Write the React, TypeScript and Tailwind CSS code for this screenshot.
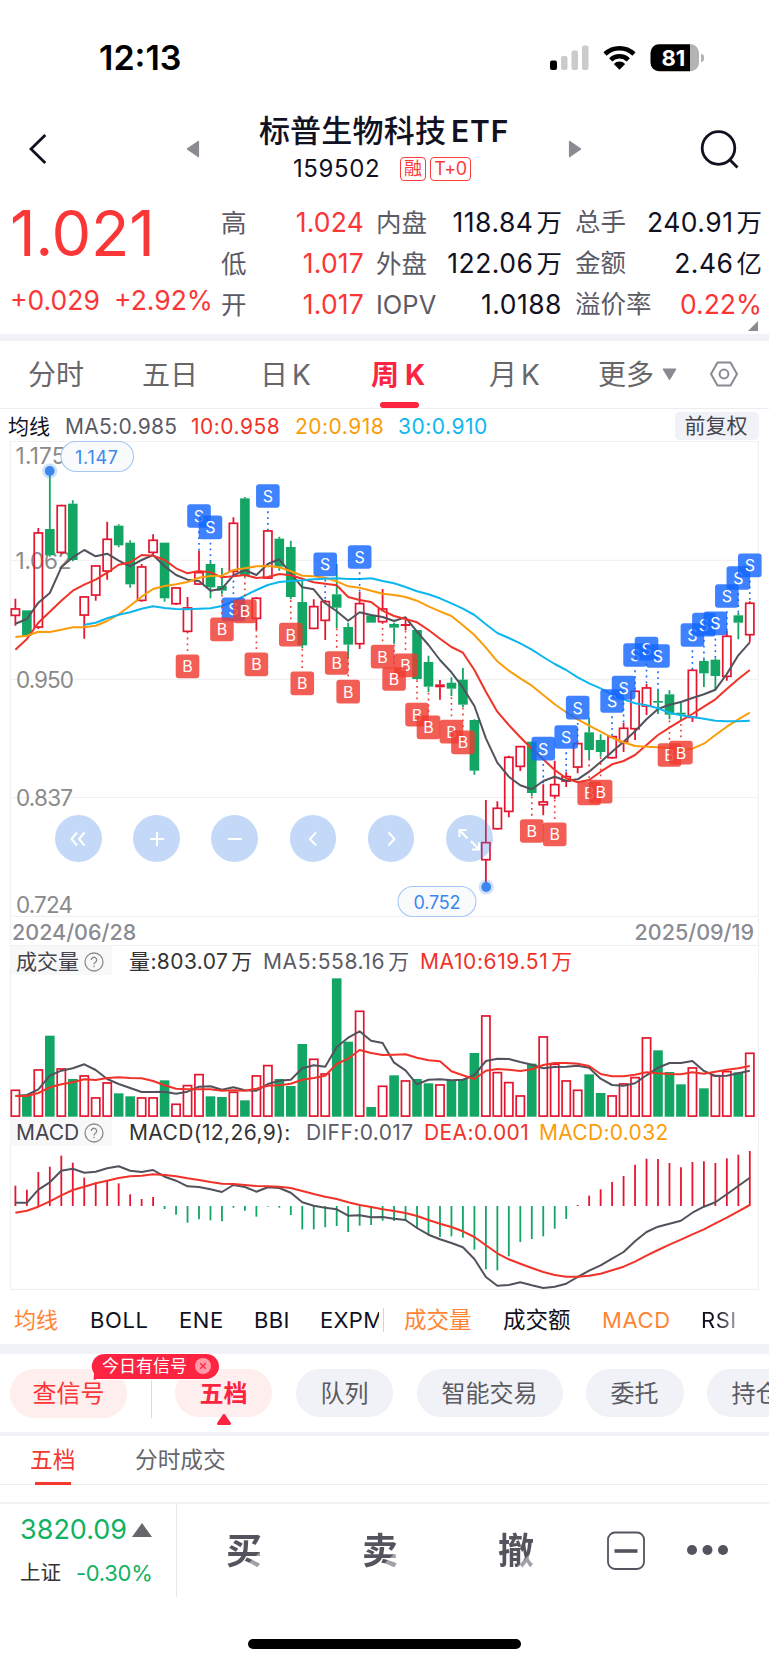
import React from 'react';

type Candle = [high: number, top: number, bottom: number, low: number, up: 0 | 1];
type Signal = [index: number, y: number];

const RED = '#e5152f';
const GREEN = '#12a564';
const GREY_LINE = '#52525d';
const RED_LINE = '#f03228';
const ORANGE_LINE = '#fa9d0b';
const BLUE_LINE = '#0db7ee';
const GRID = '#f1f1f3';

// All chart values are stored at 3x density, one unit is a third of a css pixel
const u = (v: number) => v / 3;
const cx = (i: number) => 15.4 + i * 11.475;

const candles: Candle[] = [
  [476, 506, 527, 557, 1], [511, 511, 587, 590, 0], [264, 278, 562, 567, 1], [93, 267, 346, 350, 0],
  [194, 196, 338, 343, 1], [181, 191, 360, 364, 0], [468, 470, 526, 596, 1], [375, 377, 466, 482, 1],
  [245, 297, 394, 419, 1], [253, 257, 316, 322, 0], [301, 308, 433, 443, 0], [372, 380, 482, 485, 1],
  [283, 300, 338, 343, 1], [308, 308, 475, 485, 0], [441, 443, 492, 495, 1], [471, 503, 575, 578, 1],
  [332, 397, 433, 435, 1], [364, 372, 442, 475, 0], [384, 438, 452, 463, 0], [232, 249, 395, 405, 1],
  [171, 175, 408, 412, 0], [471, 474, 536, 571, 1], [270, 272, 415, 417, 1], [290, 296, 380, 392, 0],
  [302, 321, 471, 478, 0], [420, 486, 616, 624, 0], [478, 499, 566, 568, 1], [480, 484, 542, 600, 1],
  [372, 463, 503, 565, 0], [548, 561, 614, 655, 0], [456, 490, 612, 627, 1], [526, 526, 548, 548, 0],
  [447, 506, 546, 548, 1], [548, 552, 563, 611, 0], [531, 552, 558, 571, 1], [570, 570, 717, 719, 0],
  [647, 666, 740, 756, 0], [720, 733, 742, 779, 1], [712, 728, 746, 768, 0], [684, 719, 794, 802, 0],
  [838, 840, 992, 1004, 0], [1080, 1207, 1260, 1338, 1], [1084, 1104, 1167, 1169, 1], [947, 951, 1115, 1132, 1],
  [918, 919, 980, 993, 1], [905, 905, 1059, 1068, 0], [1033, 1085, 1095, 1126, 1], [962, 1033, 1068, 1076, 1],
  [997, 1009, 1024, 1041, 1], [908, 910, 982, 1000, 1], [833, 877, 930, 957, 0], [883, 900, 936, 950, 0],
  [887, 889, 954, 956, 1], [848, 864, 906, 936, 1], [751, 753, 867, 900, 1], [732, 743, 799, 825, 1],
  [750, 783, 788, 822, 0], [751, 763, 824, 838, 0], [784, 818, 824, 840, 0], [688, 690, 833, 846, 1],
  [656, 663, 700, 741, 0], [655, 659, 708, 749, 0], [572, 588, 710, 722, 1], [518, 526, 548, 598, 0],
  [484, 489, 585, 607, 1],
];

const ma5 = [
  551, 537, 488, 459, 382, 352, 330, 349, 341, 362, 379, 360, 345, 379, 405, 419, 423, 452, 446, 406, 390, 405,
  372, 358, 400, 442, 448, 490, 514, 542, 517, 525, 531, 543, 532, 575, 615, 660, 697, 743, 798, 895, 968, 1010,
  1036, 1048, 1023, 1010, 1022, 1018, 995, 966, 935, 905, 874, 838, 807, 794, 786, 774, 763, 749, 702, 646, 607,
];
const ma10 = [
  629, 597, 548, 515, 482, 452, 434, 419, 398, 374, 367, 345, 347, 360, 385, 400, 393, 397, 412, 409, 405, 414,
  411, 402, 406, 416, 427, 431, 436, 471, 480, 486, 512, 528, 537, 547, 570, 596, 621, 638, 690, 755, 815, 855,
  892, 926, 958, 990, 1015, 1027, 1020, 995, 973, 963, 945, 915, 885, 863, 842, 822, 800, 778, 747, 717, 690,
];
const ma20 = [
  591, 587, 575, 576, 569, 562, 562, 557, 543, 523, 497, 470, 447, 438, 433, 426, 413, 408, 407, 390, 385, 379,
  378, 382, 394, 407, 409, 413, 424, 439, 443, 452, 461, 465, 471, 482, 499, 514, 528, 556, 585, 623, 664, 692,
  715, 737, 765, 793, 817, 838, 857, 875, 893, 907, 918, 920, 922, 924, 930, 926, 911, 885, 860, 838, 818,
];
// MA30 only starts at the seventh candle
const ma30 = [
  554, 548, 535, 524, 517, 506, 499, 504, 507, 508, 506, 505, 498, 484, 467, 450, 435, 426, 423, 421, 418, 416,
  415, 417, 417, 415, 423, 430, 441, 454, 463, 475, 490, 506, 525, 553, 579, 594, 610, 629, 651, 672, 690, 712,
  730, 745, 763, 778, 790, 796, 805, 818, 826, 831, 836, 842, 844, 844, 842,
];

const buys: Signal[] = [
  [15, 679], [18, 568], [20, 514], [21, 673], [24, 584], [25, 730], [28, 669], [29, 755], [32, 650], [34, 676],
  [33, 717], [35, 824], [36, 862], [38, 875], [39, 907], [45, 1173], [47, 1183], [50, 1060], [51, 1055],
  [57, 945], [58, 938],
];
const sells: Signal[] = [
  [16, 228], [17, 262], [19, 508], [22, 168], [27, 373], [30, 351], [46, 926], [48, 891], [49, 803], [52, 783],
  [53, 743], [54, 645], [55, 626], [56, 648], [59, 585], [60, 554], [61, 550], [62, 468], [63, 414], [64, 376],
];

const volumes = [
  390, 406, 329, 227, 326, 357, 347, 413, 368, 400, 409, 413, 413, 361, 432, 376, 343, 409, 411, 396, 421, 347,
  316, 357, 378, 252, 297, 341, 55, 245, 153, 441, 378, 346, 362, 357, 370, 374, 360, 357, 279, 167, 337, 367,
  407, 311, 230, 312, 362, 390, 343, 399, 407, 371, 352, 233, 271, 336, 373, 323, 385, 346, 334, 337, 279,
];
const volumeUp = '10101011100110111001011000110010101001000111101111001111000101101'.split('');
const volMa5 = [
  408, 405, 388, 347, 332, 325, 313, 330, 357, 372, 384, 396, 396, 395, 401, 395, 380, 379, 389, 382, 391, 392,
  372, 362, 359, 325, 316, 320, 261, 233, 214, 242, 249, 308, 331, 373, 359, 358, 361, 359, 345, 303, 296, 297,
  306, 314, 325, 321, 320, 317, 323, 356, 375, 377, 370, 346, 323, 309, 309, 303, 333, 348, 347, 340, 332,
];
const volMa10 = [
  408, 408, 399, 382, 373, 367, 358, 360, 354, 352, 354, 355, 363, 376, 386, 388, 388, 388, 392, 391, 392, 386,
  377, 376, 371, 359, 354, 347, 312, 296, 270, 279, 285, 284, 283, 293, 301, 304, 334, 346, 357, 332, 327, 329,
  333, 328, 315, 309, 309, 311, 318, 342, 349, 349, 344, 337, 340, 342, 343, 337, 341, 335, 329, 325, 318,
];

const macdBars = [
  677, 689, 636, 620, 587, 608, 653, 667, 662, 670, 703, 717, 711, 747, 764, 788, 778, 781, 784, 743, 752, 770,
  740, 743, 765, 808, 808, 802, 798, 816, 797, 795, 782, 783, 781, 806, 822, 831, 829, 833, 869, 928, 931, 889,
  846, 837, 829, 806, 777, 735, 707, 688, 666, 648, 614, 596, 597, 609, 622, 606, 604, 609, 595, 584, 573,
];
const diff = [
  728, 728, 689, 667, 632, 626, 638, 635, 625, 619, 632, 636, 630, 650, 662, 679, 681, 688, 696, 675, 681, 695,
  682, 684, 698, 727, 737, 743, 748, 767, 766, 772, 771, 776, 780, 804, 824, 838, 849, 862, 897, 951, 977, 975,
  967, 976, 984, 980, 971, 951, 932, 916, 896, 876, 844, 816, 800, 791, 782, 758, 740, 727, 703, 678, 653,
];
const dea = [
  758, 752, 740, 724, 706, 690, 680, 670, 662, 654, 649, 647, 643, 645, 649, 655, 660, 666, 671, 672, 675, 678,
  679, 680, 684, 693, 702, 710, 717, 727, 735, 741, 748, 753, 759, 768, 780, 791, 801, 814, 831, 856, 880, 898,
  911, 924, 936, 945, 950, 950, 947, 941, 931, 920, 905, 887, 870, 854, 839, 823, 808, 790, 773, 754, 735,
];

const Line: React.FC<{ data: number[]; color: string; start?: number }> = ({ data, color, start = 0 }) => (
  <polyline
    points={data.map((v, i) => `${cx(i + start).toFixed(1)},${u(v).toFixed(1)}`).join(' ')}
    fill="none"
    stroke={color}
    strokeWidth="2"
    strokeLinejoin="round"
  />
);

const SignalMark: React.FC<{ signal: Signal; kind: 'B' | 'S' }> = ({ signal: [i, y], kind }) => {
  const [high, , , low] = candles[i];
  const below = y > low;
  const color = kind === 'B' ? '#ef3a30' : '#1566ff';
  return (
    <g>
      <line
        x1={cx(i)}
        x2={cx(i)}
        y1={u(below ? y - 46 : y + 46)}
        y2={u(below ? low : high)}
        stroke={color}
        strokeWidth="1.6"
        strokeDasharray="1.8 4"
      />
      <rect x={cx(i) - 11.8} y={u(y) - 11.8} width="23.6" height="23.6" rx="3" fill={color} fillOpacity="0.82" />
      <text x={cx(i)} y={u(y) + 6} textAnchor="middle" fontSize="16" fill="#fff">
        {kind}
      </text>
    </g>
  );
};

const PriceChart: React.FC = () => (
  <svg width="769" height="478" viewBox="0 0 769 478" className="block">
    <g stroke={GRID} strokeWidth="1.2">
      <path d="M10.4 1.5H758.4V476.4H10.4Z" fill="none" />
      <path d="M10 120.4H758M10 239.4H758M10 357.5H758" />
    </g>
    <g fontSize="22.5" fill="#8a8a8a">
      <text x="15.5" y="23.5" textLength="50">1.175</text>
      <text x="15.5" y="128.5" textLength="56">1.062</text>
      <text x="16" y="248" textLength="58">0.950</text>
      <text x="16" y="366" textLength="57">0.837</text>
      <text x="16" y="472.5" textLength="57">0.724</text>
    </g>
    {candles.map(([high, top, bottom, low, up], i) => {
      const color = up ? RED : GREEN;
      const thin = up && bottom - top < 10;
      return (
        <g key={i} stroke={color} fill={color}>
          <path d={`M${cx(i)} ${u(high)}V${u(top)}M${cx(i)} ${u(bottom)}V${u(low)}`} strokeWidth="1.8" />
          {up && !thin ? (
            <rect x={cx(i) - 4.1} y={u(top) + 0.3} width="8.2" height={Math.max(u(bottom - top) - 0.6, 1.5)} fill="none" strokeWidth="1.7" />
          ) : (
            <rect x={cx(i) - 4.8} y={u(top)} width="9.6" height={u(bottom - top)} stroke="none" />
          )}
        </g>
      );
    })}
    <Line data={ma5} color={GREY_LINE} />
    <Line data={ma10} color={RED_LINE} />
    <Line data={ma20} color={ORANGE_LINE} />
    <Line data={ma30} color={BLUE_LINE} start={6} />
    {sells.map((s) => (
      <SignalMark key={`s${s[0]}`} signal={s} kind="S" />
    ))}
    {buys.map((b) => (
      <SignalMark key={`b${b[0]}`} signal={b} kind="B" />
    ))}
    <g fill="#3b87ee">
      <circle cx="49.7" cy="31" r="7.6" fillOpacity="0.25" />
      <circle cx="49.7" cy="31" r="4.9" />
      <circle cx="486.2" cy="447" r="7.6" fillOpacity="0.25" />
      <circle cx="486.2" cy="447" r="4.9" />
    </g>
    <g fill="#f9fafb" stroke="#a5c8f5" strokeWidth="1.1">
      <rect x="61" y="1.5" width="72.5" height="30" rx="15" />
      <rect x="398" y="446.5" width="78" height="30" rx="15" />
    </g>
    <g fontSize="18" fill="#3b87ee">
      <text x="75" y="23.5" textLength="43">1.147</text>
      <text x="413.5" y="469" textLength="47">0.752</text>
    </g>
  </svg>
);

const VolumeChart: React.FC = () => (
  <svg width="769" height="142" viewBox="0 15 769 142" className="block">
    <path d="M10.4 15V157M758.4 15V157" stroke={GRID} strokeWidth="1.2" />
    {volumes.map((v, i) =>
      volumeUp[i] === '1' ? (
        <rect key={i} x={cx(i) - 4.1} y={u(v) + 0.3} width="8.2" height={155.8 - u(v)} fill="#fff" stroke={RED} strokeWidth="1.7" />
      ) : (
        <rect key={i} x={cx(i) - 4.8} y={u(v)} width="9.6" height={156.7 - u(v)} fill={GREEN} />
      ),
    )}
    <Line data={volMa5} color={GREY_LINE} />
    <Line data={volMa10} color={RED_LINE} />
  </svg>
);

const MacdChart: React.FC = () => (
  <svg width="769" height="144" viewBox="0 186 769 144" className="block">
    <path d="M10.4 186V329.3H758.4V186" fill="none" stroke={GRID} strokeWidth="1.2" />
    {macdBars.map((v, i) => (
      <path key={i} d={`M${cx(i)} 246V${u(v)}`} stroke={v < 738 ? RED : GREEN} strokeWidth="1.8" />
    ))}
    <Line data={diff} color={GREY_LINE} />
    <Line data={dea} color={RED_LINE} />
  </svg>
);

const HelpIcon: React.FC = () => (
  <svg width="20" height="20" viewBox="0 0 20 20" fill="none" stroke="#8a8a92" strokeWidth="1.3" className="ml-[5px] shrink-0">
    <circle cx="10" cy="10" r="9" />
    <path d="M7.3 8a2.7 2.7 0 1 1 4.2 2.2c-1 .7-1.5 1.1-1.5 2.3" />
    <path d="M10 13.8v1.4" />
  </svg>
);

const StatusBar: React.FC = () => (
  <div className="flex h-[116px] items-center pb-px pl-[99px] text-black">
    <span className="w-[451px] pb-px text-[34px] font-semibold">12:13</span>
    <svg width="150" height="28" viewBox="551 43.5 150 28">
      <rect x="551" y="60" width="7" height="9.5" rx="2" />
      <g fill="#cbcbcb">
        <rect x="562" y="55.5" width="6.5" height="14" rx="2" />
        <rect x="572.5" y="50" width="6.5" height="19.5" rx="2" />
        <rect x="583" y="45" width="6.5" height="24.5" rx="2" />
      </g>
      <g fill="none" stroke="#000" strokeWidth="4.6">
        <path d="M606 53.5a21 21 0 0 1 29 0" />
        <path d="M611.7 59.3a12.8 12.8 0 0 1 17.6 0" />
      </g>
      <path d="M614.8 63.4a8 8 0 0 1 11.4 0l-5.7 5.9z" />
      <path d="M659 43.8h32.5a8.5 8.5 0 0 1 8.5 8.5v10a8.5 8.5 0 0 1-8.5 8.5H691V43.8z" fill="#b3b3b3" />
      <path d="M660 43.8h31v27h-31a8.5 8.5 0 0 1-8.5-8.5v-10a8.5 8.5 0 0 1 8.5-8.5z" />
      <text x="662.5" y="65.3" fontSize="22" fontWeight="700" fill="#fff">81</text>
    </svg>
    <span className="ml-px h-2 w-[3px] rounded-r-full bg-[#b3b3b3]" />
  </div>
);

const Header: React.FC = () => (
  <div className="flex h-[80px] items-center pl-[29px]">
    <svg width="18" height="30" viewBox="0 0 18 30" fill="none" stroke="#11111f" strokeWidth="2.8" className="mt-[-15px]">
      <path d="M16.3 1L2 15l14.3 14" />
    </svg>
    <svg width="14" height="18" viewBox="0 0 14 18" className="mt-[-15px] ml-[139px]">
      <path d="M12.6 1v16L1 9z" fill="#8a8a92" stroke="#8a8a92" strokeLinejoin="round" />
    </svg>
    <div className="mt-[-16px] flex w-[368px] flex-col items-center">
      <h1 className="flex h-[36px] items-center whitespace-nowrap text-[31px] leading-none font-medium tracking-[0.2px] text-[#11111f]">
        标普生物科技<span className="ml-[5px] text-[30px] font-semibold tracking-[0.8px]">ETF</span>
      </h1>
      <div className="mt-[5px] flex h-[30px] items-center pr-[4px]">
        <span className="w-[107px] text-[24px] tracking-[0.6px] text-[#11111f]">159502</span>
        <span className="flex h-6 w-[26px] items-center justify-center rounded-[4px] border-[1.5px] border-[#fa3c3c] text-[18px] leading-none text-[#fa3c3c]">融</span>
        <span className="ml-1 flex h-6 w-[41px] items-center justify-center rounded-[4px] border-[1.5px] border-[#fa3c3c] text-[18px] leading-none tracking-[-0.4px] text-[#fa3c3c]">T+0</span>
      </div>
    </div>
    <svg width="14" height="18" viewBox="0 0 14 18" className="mt-[-15px]">
      <path d="M1.4 1v16L13 9z" fill="#8a8a92" stroke="#8a8a92" strokeLinejoin="round" />
    </svg>
    <svg width="40" height="40" viewBox="0 0 40 40" fill="none" stroke="#11111f" strokeWidth="2.8" className="mt-[-15px] ml-[118px]">
      <circle cx="18.5" cy="19" r="16.3" />
      <path d="M29.5 30.5l8 8" />
    </svg>
  </div>
);

const quoteRows = [
  ['高', '1.024', '内盘', '118.84', '万', '总手', '240.91', '万'],
  ['低', '1.017', '外盘', '122.06', '万', '金额', '2.46', '亿'],
  ['开', '1.017', 'IOPV', '1.0188', '', '溢价率', '0.22%', ''],
];

const Quote: React.FC = () => (
  <div className="relative flex h-[138px]">
    <div className="w-[221px] pl-[10px] whitespace-nowrap text-[#fa3637]">
      <div className="mt-[4px] h-[66px] text-[63px] leading-[66px] tracking-[-0.3px]">1.021</div>
      <div className="mt-[18px] flex text-[26.5px] leading-[32px]">
        <span className="w-[104px]">+0.029</span>
        <span>+2.92%</span>
      </div>
    </div>
    <div className="mt-[6px] flex w-[541px] flex-col text-[26.5px]">
      {quoteRows.map(([a, b, c, d, dUnit, e, f, fUnit]) => (
        <div key={a} className="flex h-[41px] items-center whitespace-nowrap leading-none">
          <span className="w-[30px] text-[25.5px] text-[#5b5b66]">{a}</span>
          <span className="w-[113px] text-right tracking-[0.2px] text-[#fa3637]">{b}</span>
          <span className="ml-[12px] text-[25.5px] text-[#5b5b66]">{c}</span>
          <span className="ml-auto text-right tracking-[0.5px] text-[#11111f]">
            {d}
            {dUnit && <span className="ml-[3px] text-[25.5px] tracking-normal">{dUnit}</span>}
          </span>
          <div className="ml-[13px] flex w-[187px] justify-between">
            <span className="text-[25.5px] text-[#5b5b66]">{e}</span>
            <span className={fUnit ? 'tracking-[0.5px] text-[#11111f]' : 'text-[#fa3637]'}>
              {f}
              {fUnit && <span className="ml-[3px] text-[25.5px] tracking-normal">{fUnit}</span>}
            </span>
          </div>
        </div>
      ))}
    </div>
    <svg width="10" height="10" viewBox="0 0 10 10" className="absolute right-[11px] bottom-[3px]">
      <path d="M10 0v10H0z" fill="#8a8a92" />
    </svg>
  </div>
);

const PeriodTabs: React.FC = () => (
  <div className="flex h-[68px] items-center border-b border-[#ececf0] pl-[28px] text-[28px] whitespace-nowrap text-[#66666b]">
    <span className="w-[114px]">分时</span>
    <span className="w-[118px]">五日</span>
    <span className="w-[111px]">日<span className="ml-1">K</span></span>
    <span className="relative flex h-full w-[118px] items-center font-bold text-[#fc2440]">
      周<span className="ml-1.5">K</span>
      <span className="absolute bottom-0 left-[9px] h-[6px] w-[39px] rounded-[3px] bg-[#fc2440]" />
    </span>
    <span className="w-[109px]">月<span className="ml-1">K</span></span>
    <span>更多</span>
    <svg width="15" height="12" viewBox="0 0 15 12" className="mt-[-2px] ml-[8px]">
      <path d="M1.5 1.2h12L7.5 11z" fill="#8a8a92" stroke="#8a8a92" strokeLinejoin="round" strokeWidth="1.6" />
    </svg>
    <svg width="28" height="26" viewBox="0 0 28 26" fill="none" stroke="#8a8a92" strokeWidth="2" className="mt-[-2px] ml-[33px]">
      <path d="M7.5 1.4h13L27 13l-6.5 11.6h-13L1 13z" strokeLinejoin="round" />
      <circle cx="14" cy="13" r="4.4" />
    </svg>
  </div>
);

const MaLegend: React.FC = () => (
  <div className="flex h-[31px] items-center pt-[3px] pl-[8px] text-[21px] leading-none whitespace-nowrap">
    <span className="w-[57px] text-[#11111f]">均线</span>
    <span className="w-[126px] tracking-[0.3px] text-[#5b5b66]">MA5:0.985</span>
    <span className="w-[104px] tracking-[0.5px] text-[#f03228]">10:0.958</span>
    <span className="w-[103px] tracking-[0.5px] text-[#fa9d0b]">20:0.918</span>
    <span className="tracking-[0.5px] text-[#0db7ee]">30:0.910</span>
    <span className="mr-[10px] ml-auto flex h-[28px] w-[84px] items-center justify-center rounded-[5px] bg-[#f1f2f7] pr-[2px] pb-[1px] text-[#44444c]">前复权</span>
  </div>
);

const chartTools = [
  'M17 11.5l-5.5 6.5 5.5 6.5M24.5 11.5l-5.5 6.5 5.5 6.5',
  'M18 11v14M11 18h14',
  'M11 18h14',
  'M21 11.5l-6 6.5 6 6.5',
  'M15.5 11.5l6 6.5-6 6.5',
  'M8.500 16V9h7M8.500 9l8 8.500M28 21.500V28.500h-7M28 28.500l-8-8.500',
];

const ChartTools: React.FC = () => (
  <div className="absolute top-[375px] left-[55px] flex gap-[31.5px]">
    {chartTools.map((d) => (
      <button key={d} className="flex h-[47px] w-[46.7px] items-center justify-center rounded-full bg-[#3b82e6]/30">
        <svg width="36" height="36" viewBox="0 0 36 36" fill="none" stroke="#fff" strokeWidth="2">
          <path d={d} />
        </svg>
      </button>
    ))}
  </div>
);

const SubTitle: React.FC<{ title: string; children: React.ReactNode }> = ({ title, children }) => (
  <div className="mx-[10px] flex h-[29px] items-center border-x border-[#f1f1f3] text-[21px] leading-none tracking-[0.4px] whitespace-nowrap">
    <div className="flex h-full w-[101px] items-center bg-[#f8f8f9] pt-[2px] pl-[5px] tracking-normal text-[#44444c]">
      <span className="w-[63px]">{title}</span>
      <HelpIcon />
    </div>
    <div className="flex h-full items-center pt-[2px] pl-[17px]">{children}</div>
  </div>
);

const IndicatorTabs: React.FC = () => (
  <div className="flex h-[54px] items-center pt-[6px] text-[22px] whitespace-nowrap text-[#11111f]">
    <div className="flex w-[379px] overflow-hidden pl-[14px]">
      <span className="w-[76px] shrink-0 text-[#ff8534]">均线</span>
      <span className="w-[89px] shrink-0 tracking-[0.6px]">BOLL</span>
      <span className="w-[75px] shrink-0 tracking-[0.6px]">ENE</span>
      <span className="w-[66px] shrink-0 tracking-[0.4px]">BBI</span>
      <span className="tracking-[0.3px]">EXPMA</span>
    </div>
    <span className="ml-[4px] h-[24px] w-px bg-[#d4d4d8]" />
    <div className="flex items-center pl-[20px]">
      <span className="w-[99px] text-[22.5px] text-[#ff8534]">成交量</span>
      <span className="w-[99px] text-[22.5px]">成交额</span>
      <span className="w-[99px] tracking-[0.6px] text-[#ff8534]">MACD</span>
      <span className="bg-linear-to-r from-[#11111f] from-40% to-[#a5a5ad] bg-clip-text tracking-[0.5px] text-transparent">RSI</span>
    </div>
  </div>
);

const ActionPills: React.FC = () => (
  <div className="relative flex h-[78px] pt-[15px] pl-[10px] text-[24px] whitespace-nowrap text-[#5b5b62]">
    <span className="flex h-[49px] w-[117px] shrink-0 items-center justify-center rounded-full bg-[#ffeeee] pt-px text-[#fa3637]">查信号</span>
    <span className="mt-[11px] ml-[24px] h-[38px] w-px shrink-0 bg-[#dcdce0]" />
    <span className="ml-[23px] flex h-[48px] w-[97px] shrink-0 items-center justify-center rounded-full bg-[#ffeeee] pt-px font-bold text-[#fc2440]">五档</span>
    <span className="ml-[24px] flex h-[48px] w-[97px] shrink-0 items-center justify-center rounded-full bg-[#f1f2f7] pt-px">队列</span>
    <span className="ml-[24px] flex h-[48px] w-[146px] shrink-0 items-center justify-center rounded-full bg-[#f1f2f7] pt-px pr-px">智能交易</span>
    <span className="ml-[23px] flex h-[48px] w-[98px] shrink-0 items-center justify-center rounded-full bg-[#f1f2f7] pt-px pr-px">委托</span>
    <span className="ml-[23px] flex h-[48px] w-[97px] shrink-0 items-center justify-center rounded-full bg-[#f1f2f7] pt-px">持仓</span>
    <svg width="16" height="12" viewBox="0 0 16 12" className="absolute top-[60px] left-[216px]">
      <path d="M8 1.5L13.500 9.500H2.500z" fill="#fc2440" stroke="#fc2440" strokeWidth="3" strokeLinejoin="round" />
    </svg>
    <div className="absolute top-0 left-[92px] flex h-[25px] w-[127px] items-center pb-px pl-[10px] text-[17px] leading-none text-white">
      <svg width="129" height="28" viewBox="-1 -1 129 28" className="absolute -top-px -left-px">
        <path
          d="M12.5 0H114.500a12.500 12.500 0 0 1 0 25H5L1.500 26 2 19.500A12.500 12.500 0 0 1 12.500 0z"
          fill="#fc2440"
          stroke="#fff"
          strokeWidth="2"
          paintOrder="stroke"
        />
      </svg>
      <span className="relative">今日有信号</span>
      <svg width="16" height="16" viewBox="0 0 16 16" className="relative ml-[8px]">
        <circle cx="8" cy="8" r="8" fill="#ff9aa6" />
        <path d="M5.2 5.2l5.6 5.6M10.8 5.2l-5.6 5.6" stroke="#fc2440" strokeWidth="1.3" />
      </svg>
    </div>
  </div>
);

const TradeBar: React.FC = () => (
  <div className="flex h-[95px] border-t-2 border-[#f1f1f3]">
    <div className="flex h-full w-[177px] flex-col border-r border-[#e8e8ec] pl-[20px] whitespace-nowrap">
      <div className="mt-[9px] flex h-[34px] items-center text-[27px] text-[#0fb262]">
        <span className="w-[112px]">3820.09</span>
        <svg width="20" height="14" viewBox="0 0 20 14">
          <path d="M10 0l10 14H0z" fill="#66666b" />
        </svg>
      </div>
      <div className="mt-[11px] flex h-[30px] items-center">
        <span className="w-[56px] text-[20.5px] text-[#333]">上证</span>
        <span className="text-[22px] tracking-[-0.3px] text-[#0fb262]">-0.30%</span>
      </div>
    </div>
    <div className="flex h-[93px] items-center pl-[49px] text-[36px] leading-none font-bold">
      {['买', '卖', '撤'].map((label) => (
        <span key={label} className="w-[136px]">
          <span className="bg-[linear-gradient(135deg,#54545e_70%,#a0a0a8_72%)] bg-clip-text text-transparent">{label}</span>
        </span>
      ))}
      <svg width="124" height="40" viewBox="0 0 124 40" className="-ml-[27px] shrink-0" fill="none" stroke="#54545e">
        <rect x="1" y="1.5" width="36" height="36.5" rx="7" strokeWidth="1.8" />
        <path d="M7.5 20h23" strokeWidth="3.6" />
        <g fill="#54545e" stroke="none">
          <circle cx="85" cy="19" r="5" />
          <circle cx="100.5" cy="19" r="5" />
          <circle cx="116" cy="19" r="5" />
        </g>
      </svg>
    </div>
  </div>
);

const App: React.FC = () => {
  return (
    <div className="flex h-[1665px] w-[769px] flex-col overflow-hidden bg-white font-['Inter','Noto_Sans_CJK_SC',sans-serif]">
      <StatusBar />
      <Header />
      <Quote />
      <div className="h-[7px] bg-[#f1f2f7]" />
      <PeriodTabs />
      <MaLegend />
      <div className="relative h-[478px]">
        <PriceChart />
        <ChartTools />
      </div>
      <div className="mx-[10px] flex h-[28px] items-center justify-between border-x border-b border-[#f1f1f3] pt-px pr-[4px] pl-[1px] text-[21.5px] font-medium text-[#8a8a92]">
        <span>2024/06/28</span>
        <span>2025/09/19</span>
      </div>
      <SubTitle title="成交量">
        <span className="w-[134px] text-[#333]">量:803.07<span className="ml-[3px]">万</span></span>
        <span className="w-[157px] tracking-[0.6px] text-[#5b5b66]">MA5:558.16<span className="ml-[3px]">万</span></span>
        <span className="tracking-[0.6px] text-[#f03228]">MA10:619.51<span className="ml-[3px]">万</span></span>
      </SubTitle>
      <VolumeChart />
      <SubTitle title="MACD">
        <span className="w-[177px] text-[#333]">MACD(12,26,9):</span>
        <span className="w-[118px] text-[#5b5b66]">DIFF:0.017</span>
        <span className="w-[115px] text-[#f03228]">DEA:0.001</span>
        <span className="tracking-[0.3px] text-[#fa9d0b]">MACD:0.032</span>
      </SubTitle>
      <MacdChart />
      <IndicatorTabs />
      <div className="h-[10px] bg-[#f1f2f7]" />
      <ActionPills />
      <div className="h-[4px] bg-[#f1f2f7]" />
      <div className="flex h-[49px] items-center border-b border-[#ececf0] pt-px pl-[30px] text-[22.7px] text-[#66666b]">
        <span className="relative flex h-full w-[105px] items-center text-[#f5372d]">
          五档
          <span className="absolute -bottom-px left-[5px] h-[3px] w-[36px] bg-[#f5372d]" />
        </span>
        <span>分时成交</span>
      </div>
      <div className="h-[17px]" />
      <TradeBar />
      <div className="mx-auto mt-[42px] h-[10px] w-[273px] rounded-full bg-black" />
    </div>
  );
};

export default App;
